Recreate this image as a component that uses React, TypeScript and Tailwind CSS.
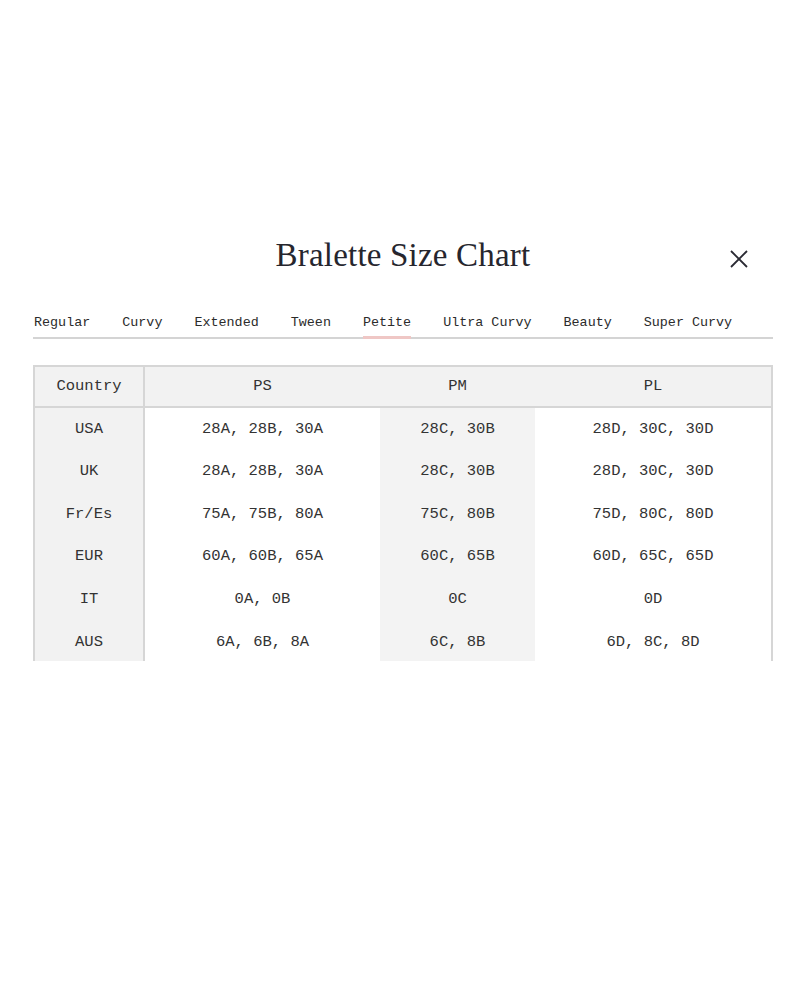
const tabs = ['Regular', 'Curvy', 'Extended', 'Tween', 'Petite', 'Ultra Curvy', 'Beauty', 'Super Curvy'];

const rows = [
  { country: 'USA', ps: '28A, 28B, 30A', pm: '28C, 30B', pl: '28D, 30C, 30D' },
  { country: 'UK', ps: '28A, 28B, 30A', pm: '28C, 30B', pl: '28D, 30C, 30D' },
  { country: 'Fr/Es', ps: '75A, 75B, 80A', pm: '75C, 80B', pl: '75D, 80C, 80D' },
  { country: 'EUR', ps: '60A, 60B, 65A', pm: '60C, 65B', pl: '60D, 65C, 65D' },
  { country: 'IT', ps: '0A, 0B', pm: '0C', pl: '0D' },
  { country: 'AUS', ps: '6A, 6B, 8A', pm: '6C, 8B', pl: '6D, 8C, 8D' },
];

export default function App() {
  return (
    <div className="min-h-[1000px] w-[800px] bg-white pt-[233px] pl-[33px] pr-[27px] text-[#333]">
      {/* Title */}
      <div className="relative flex justify-center items-center h-[46px]">
        <h1 className="text-[33px] text-[#26262e] tracking-[0.2px]" style={{ fontFamily: '"Liberation Serif", serif' }}>
          Bralette Size Chart
        </h1>
        <button className="absolute right-[25px] top-[17px] w-[18px] h-[18px]">
          <svg width="18" height="18" viewBox="0 0 18 18" stroke="#2a2a33" strokeWidth={1.8} fill="none">
            <path d="M1 1l16 16M17 1L1 17" />
          </svg>
        </button>
      </div>

      {/* Tabs */}
      <div className="mt-[36px] flex gap-[32px] border-b-2 border-[#d4d4d4] pl-px" style={{ fontFamily: '"Liberation Mono", monospace' }}>
        {tabs.map((t) => (
          <div key={t} className="relative pb-[6px] text-[13.4px] leading-[16px] text-[#2b2b2b]">
            {t}
            {t === 'Petite' && <span className="absolute left-0 right-0 bottom-[-2px] h-[3px] bg-[#efc7c5]" />}
          </div>
        ))}
      </div>

      {/* Table */}
      <div className="mt-[26px] h-[296px] w-[740px] overflow-hidden" style={{ fontFamily: '"Liberation Mono", monospace' }}>
        <table className="w-[740px] border-separate border-spacing-0 text-[15.5px] text-[#333] table-fixed">
          <colgroup>
            <col className="w-[112px]" />
            <col className="w-[235px]" />
            <col className="w-[155px]" />
            <col className="w-[238px]" />
          </colgroup>
          <thead>
            <tr className="h-[43px] bg-[#f2f2f2]">
              <th className="font-normal border-2 border-[#d6d6d6]">Country</th>
              <th className="font-normal border-y-2 border-[#d6d6d6]">PS</th>
              <th className="font-normal border-y-2 border-[#d6d6d6]">PM</th>
              <th className="font-normal border-y-2 border-r-2 border-[#d6d6d6]">PL</th>
            </tr>
          </thead>
          <tbody>
            {rows.map((r) => (
              <tr key={r.country} className="h-[42.6px]">
                <td className="text-center bg-[#f2f2f2] border-x-2 border-[#d6d6d6]">{r.country}</td>
                <td className="text-center">{r.ps}</td>
                <td className="text-center bg-[#f3f3f3]">{r.pm}</td>
                <td className="text-center border-r-2 border-[#d6d6d6]">{r.pl}</td>
              </tr>
            ))}
          </tbody>
        </table>
      </div>
    </div>
  );
}
